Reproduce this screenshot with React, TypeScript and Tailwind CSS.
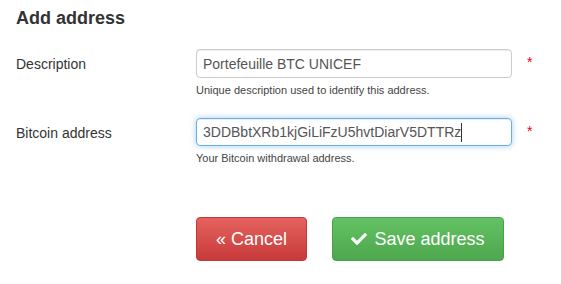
import React from "react";
import { FaCheck } from "react-icons/fa";

export default function App() {
  return (
    <div className="w-[561px] h-[284px] bg-white px-4 text-[#333]" style={{ fontFamily: '"Liberation Sans", Arial, sans-serif' }}>
      <h3 className="pt-[8px] text-[18px] leading-[20px] font-bold text-[#333]">Add address</h3>

      <div className="mt-[21px] flex items-start">
        <label className="w-[180px] h-[30px] flex items-center text-[14px]">Description</label>
        <div className="w-[316px]">
          <input
            readOnly
            value="Portefeuille BTC UNICEF"
            className="w-full h-[29px] px-[6px] border border-[#ccc] rounded-[4px] text-[14px] text-[#555] outline-none shadow-[inset_0_1px_1px_rgba(0,0,0,0.075)]"
            style={{ fontFamily: '"Liberation Sans", Arial, sans-serif' }}
          />
          <p className="mt-[6px] text-[11px] leading-[13px] text-[#444]">Unique description used to identify this address.</p>
        </div>
        <span className="ml-[15px] mt-[6px] text-[14px] text-[#e00] leading-[14px]">*</span>
      </div>

      <div className="mt-[21px] flex items-start">
        <label className="w-[180px] h-[30px] flex items-center text-[14px]">Bitcoin address</label>
        <div className="w-[316px]">
          <div className="w-full h-[28px] px-[6px] border border-[#66afe9] rounded-[4px] text-[14px] text-[#555] flex items-center shadow-[inset_0_1px_1px_rgba(0,0,0,0.075),0_0_6px_rgba(102,175,233,0.6)]">
            <span>3DDBbtXRb1kjGiLiFzU5hvtDiarV5DTTRz</span>
            <span className="inline-block w-px h-[19px] bg-[#333]" />
          </div>
          <p className="mt-[6px] text-[11px] leading-[13px] text-[#444]">Your Bitcoin withdrawal address.</p>
        </div>
        <span className="ml-[15px] mt-[6px] text-[14px] text-[#e00] leading-[14px]">*</span>
      </div>

      <div className="mt-[52px] ml-[180px] flex gap-[25px]">
        <button className="w-[111px] h-[44px] rounded-[4px] border border-[#c0393a] bg-gradient-to-b from-[#e4625f] to-[#c8393a] text-white text-[18px] flex items-center justify-center">
          « Cancel
        </button>
        <button className="w-[172px] h-[44px] rounded-[4px] border border-[#4a9f4a] bg-gradient-to-b from-[#63c263] to-[#4ea74e] text-white text-[18px] flex items-center justify-center gap-[7px]">
          <FaCheck className="w-[16px] h-[16px]" />
          <span>Save address</span>
        </button>
      </div>
    </div>
  );
}
